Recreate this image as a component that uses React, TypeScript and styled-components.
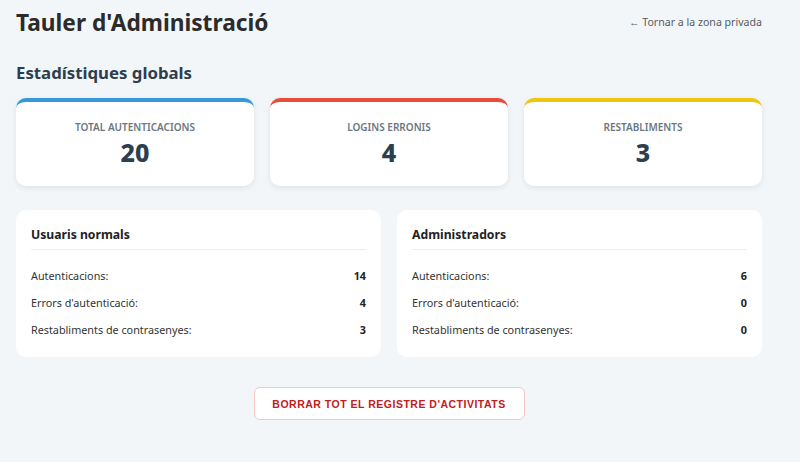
import styled, { createGlobalStyle } from 'styled-components';

const GlobalStyle = createGlobalStyle`
  html, body {
    margin: 0;
    padding: 0;
    background: #f3f6f9;
  }
  body {
    font-family: "Noto Sans", "Open Sans", Arial, sans-serif;
    color: #2c2c2c;
  }
  * {
    box-sizing: border-box;
  }
`;

const stats = [
  { label: 'Total autenticacions', value: 20, color: '#3498db' },
  { label: 'Logins erronis', value: 4, color: '#e74c3c' },
  { label: 'Restabliments', value: 3, color: '#f1c40f' },
];

const groups = [
  { title: 'Usuaris normals', auth: 14, errors: 4, resets: 3 },
  { title: 'Administradors', auth: 6, errors: 0, resets: 0 },
];

const App = () => {
  return (
    <>
      <GlobalStyle />
      <Page>
        <Header>
          <Title>Tauler d'Administració</Title>
          <BackLink href="#">← Tornar a la zona privada</BackLink>
        </Header>

        <SectionTitle>Estadístiques globals</SectionTitle>

        <StatGrid>
          {stats.map((s) => (
            <StatCard key={s.label} $accent={s.color}>
              <StatLabel>{s.label}</StatLabel>
              <StatValue>{s.value}</StatValue>
            </StatCard>
          ))}
        </StatGrid>

        <PanelGrid>
          {groups.map((g) => (
            <Panel key={g.title}>
              <PanelTitle>{g.title}</PanelTitle>
              <Row>
                <span>Autenticacions:</span>
                <RowValue>{g.auth}</RowValue>
              </Row>
              <Row>
                <span>Errors d'autenticació:</span>
                <RowValue>{g.errors}</RowValue>
              </Row>
              <Row>
                <span>Restabliments de contrasenyes:</span>
                <RowValue>{g.resets}</RowValue>
              </Row>
            </Panel>
          ))}
        </PanelGrid>

        <Actions>
          <DangerButton>Borrar tot el registre d'activitats</DangerButton>
        </Actions>
      </Page>
    </>
  );
};

export default App;

const Page = styled.div`
  width: 746px;
  margin-left: 16px;
  padding-top: 4px;
`;

const Header = styled.div`
  display: flex;
  justify-content: space-between;
  align-items: center;
  height: 36px;
`;

const Title = styled.h1`
  margin: 0;
  font-size: 22.7px;
  font-weight: 700;
  color: #2b2b2b;
`;

const BackLink = styled.a`
  font-size: 10.6px;
  color: #555c63;
  text-decoration: none;
`;

const SectionTitle = styled.h2`
  margin: 20px 0 0;
  font-size: 16.8px;
  font-weight: 700;
  color: #2c3e50;
  line-height: 26px;
`;

const StatGrid = styled.div`
  display: grid;
  grid-template-columns: repeat(3, 1fr);
  gap: 16px;
  margin-top: 12px;
`;

const StatCard = styled.div<{ $accent: string }>`
  height: 88px;
  background: #fff;
  border-radius: 10px;
  border-top: 4px solid ${(p) => p.$accent};
  box-shadow: 0 2px 6px rgba(0, 0, 0, 0.08);
  display: flex;
  flex-direction: column;
  align-items: center;
  padding-top: 16px;
`;

const StatLabel = styled.div`
  font-size: 10px;
  font-weight: 600;
  text-transform: uppercase;
  color: #6b7780;
  line-height: 18px;
`;

const StatValue = styled.div`
  font-size: 25px;
  font-weight: 800;
  color: #2c3e50;
  line-height: 32px;
`;

const PanelGrid = styled.div`
  display: grid;
  grid-template-columns: 1fr 1fr;
  gap: 16px;
  margin-top: 24px;
`;

const Panel = styled.div`
  background: #fff;
  border-radius: 10px;
  padding: 15px 15px 10px;
  height: 147px;
`;

const PanelTitle = styled.div`
  font-size: 12.2px;
  font-weight: 700;
  color: #222;
  line-height: 20px;
  padding-bottom: 4px;
  border-bottom: 1px solid #edf0f2;
  margin-bottom: 12px;
`;

const Row = styled.div`
  display: flex;
  justify-content: space-between;
  align-items: center;
  font-size: 10.8px;
  color: #333;
  height: 27px;
`;

const RowValue = styled.span`
  font-weight: 700;
  color: #222;
`;

const Actions = styled.div`
  display: flex;
  justify-content: center;
  margin-top: 30px;
`;

const DangerButton = styled.button`
  width: 271px;
  height: 33px;
  padding: 0;
  white-space: nowrap;
  background: #fff;
  border: 1px solid #f7c5c5;
  border-radius: 6px;
  color: #c0201c;
  font-family: "Liberation Sans", Arial, sans-serif;
  font-size: 10.5px;
  font-weight: 700;
  letter-spacing: 0.5px;
  text-transform: uppercase;
  cursor: pointer;
`;
